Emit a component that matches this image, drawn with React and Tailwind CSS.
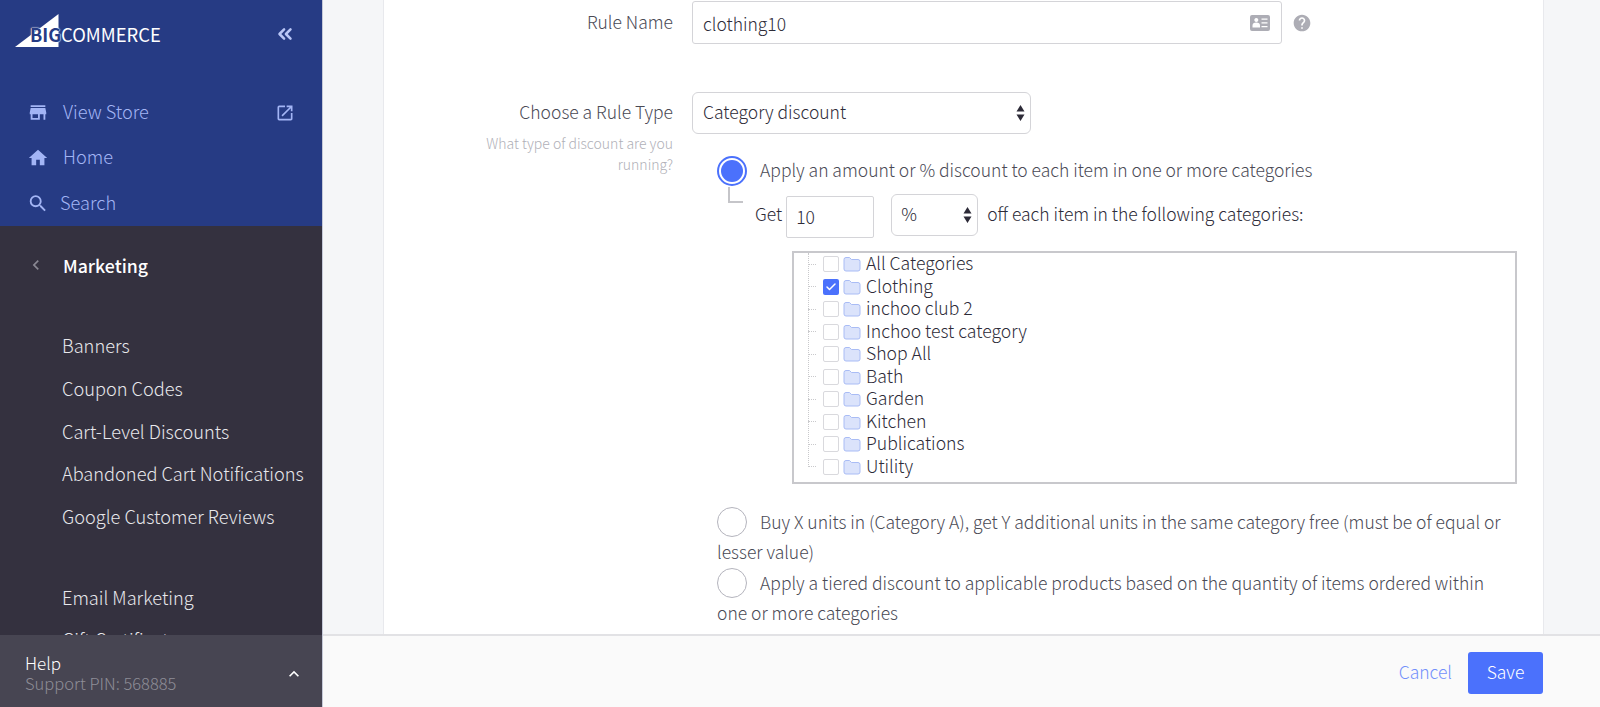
import React from "react";
import { MdStore, MdHome, MdSearch, MdOpenInNew, MdHelp, MdKeyboardArrowUp, MdKeyboardArrowLeft } from "react-icons/md";
import { ChevronsLeft, Check } from "lucide-react";

const FONT = "font-['Noto_Sans_CJK_SC','Source_Sans_Pro','Open_Sans',sans-serif]";
const cats = ["All Categories", "Clothing", "inchoo club 2", "Inchoo test category", "Shop All", "Bath", "Garden", "Kitchen", "Publications", "Utility"];

function Arrows() {
  return (
    <svg width="9" height="20" viewBox="0 0 9 20" className="shrink-0">
      <path d="M4.5 2 L8.5 8.5 H0.5 Z M0.5 11.5 H8.5 L4.5 18 Z" fill="#2d2b38" />
    </svg>
  );
}

function Folder() {
  return (
    <svg width="18" height="16" viewBox="0 0 18 16" className="block shrink-0">
      <path d="M1 3.5 a2 2 0 0 1 2-2 h3.5 l2 2 h6.5 a2 2 0 0 1 2 2 v7.5 a2 2 0 0 1-2 2 H3 a2 2 0 0 1-2-2 Z" fill="#dbe3fb" stroke="#a9bcf5" strokeWidth="1" />
    </svg>
  );
}

function Radio({ on }) {
  return on ? (
    <span className="flex h-[30px] w-[30px] shrink-0 items-center justify-center rounded-full border-2 border-[#4b71fc] bg-white">
      <span className="h-[22px] w-[22px] rounded-full bg-[#4b71fc]" />
    </span>
  ) : (
    <span className="-my-2 inline-block h-[30px] w-[30px] shrink-0 rounded-full border border-[#b4b4bd] bg-white align-[0px]" />
  );
}

function NavTop({ icon, label, gap, right, extra }) {
  return (
    <div className={`flex h-[45px] items-center pl-[27px] pr-[27px] text-[18.2px] text-[#a3b5f5] ${extra}`}>
      <span className="flex w-[22px] justify-center">{icon}</span>
      <span className={`${gap} pb-[3px]`}>{label}</span>
      {right && <span className="ml-auto">{right}</span>}
    </div>
  );
}

export default function App() {
  return (
    <div className={`${FONT} flex h-[707px] w-[1600px] overflow-hidden bg-white font-light leading-[24px] text-[#2d2b38]`}>
      <aside className="flex h-full w-[322px] shrink-0 flex-col bg-[#34313f]">
        <div className="h-[226px] shrink-0 bg-[#263b84]">
          <div className="flex h-[90px] items-start pl-[15px] pr-[26px] pt-[14px]">
            <div className="relative h-[33px] w-[146px]">
              <svg width="44" height="33" viewBox="0 0 44 33" className="absolute left-0 top-0">
                <path d="M0 33 L43.5 0 V33 Z" fill="#fff" />
              </svg>
              <span className="absolute left-[15px] top-[8px] text-[18px] leading-[24px] font-bold text-[#263b84] [text-shadow:0_0_1px_#fff,0_0_1px_#fff,0_0_2px_#fff]">BIG</span>
              <span className="absolute left-[46px] top-[8px] text-[18.4px] leading-[24px] font-normal text-white">COMMERCE</span>
            </div>
            <ChevronsLeft className="ml-auto mt-[9px] text-[#b9c6f7]" size={22} strokeWidth={2.75} />
          </div>
          <NavTop icon={<MdStore size={27} />} label="View Store" gap="ml-[14px]" right={<MdOpenInNew size={20} />} />
          <NavTop icon={<MdHome size={26} />} label="Home" gap="ml-[14px]" />
          <NavTop icon={<MdSearch size={27} />} label="Search" gap="ml-[11px]" extra="pt-[1px]" />
        </div>
        <div className="min-h-0 flex-1 overflow-hidden text-[18.2px] text-[#e8e8ec]">
          <div className="mt-[18px] flex h-[41px] items-center pl-[26px]">
            <MdKeyboardArrowLeft size={20} className="text-[#8a8893]" />
            <span className="ml-[17px] text-[17.7px] font-medium text-white">Marketing</span>
          </div>
          <div className="mt-[39px] flex flex-col pl-[62px]">
            {["Banners", "Coupon Codes", "Cart-Level Discounts", "Abandoned Cart Notifications", "Google Customer Reviews"].map((t) => (
              <div key={t} className="h-[42.75px] whitespace-nowrap leading-[43px]">{t}</div>
            ))}
          </div>
          <div className="mt-[38px] flex flex-col pl-[62px]">
            {["Email Marketing", "Gift Certificates"].map((t) => (
              <div key={t} className="h-[42px] whitespace-nowrap leading-[42px]">{t}</div>
            ))}
          </div>
        </div>
        <div className="flex h-[72px] shrink-0 items-center bg-[#474552] pl-[25px] pr-[18px]">
          <div className="pt-[3px]">
            <div className="text-[17px] leading-[21px] text-white">Help</div>
            <div className="text-[16.5px] leading-[21px] text-[#8e8d97]">Support PIN: 568885</div>
          </div>
          <MdKeyboardArrowUp size={20} className="ml-auto mt-[6px] text-white" />
        </div>
      </aside>

      <main className="flex min-w-0 flex-1 flex-col border-l border-[#c5c9d8] bg-[#f5f6f8]">
        <div className="min-h-0 flex-1 overflow-hidden">
          <div className="ml-[60px] h-full w-[1161px] border-x border-[#e8e9ed] bg-white text-[17.5px]">
            <div className="flex items-start pt-px">
              <label className="w-[289px] shrink-0 pt-[9px] text-right text-[#4a4a55]">Rule Name</label>
              <div className="ml-[19px] flex h-[43px] w-[590px] items-center rounded-[3px] border border-[#d4d4d8] pl-[10px] pr-[11px]">
                <span className="pt-[3px]">clothing10</span>
                <svg width="20" height="16" viewBox="0 0 20 16" className="ml-auto">
                  <path fillRule="evenodd" d="M2 0 H18 a2 2 0 0 1 2 2 V14 a2 2 0 0 1-2 2 H2 a2 2 0 0 1-2-2 V2 a2 2 0 0 1 2-2 Z M6.3 3 a2 2 0 1 0 .01 0 Z M2.5 12.5 h7.5 v-2 a3 2.5 0 0 0-7.5 0 Z M11.5 3.5 h6 v1.3 h-6 Z M11.5 7.3 h6 v1.3 h-6 Z M11.5 11 h6 v1.3 h-6 Z" fill="#adadb5" />
                </svg>
              </div>
              <MdHelp size={20} className="ml-[10px] mt-[12px] text-[#adadb5]" />
            </div>

            <div className="mt-[48px] flex items-start">
              <div className="w-[289px] shrink-0 text-right">
                <div className="pt-[8px] text-[#4a4a55]">Choose a Rule Type</div>
                <div className="ml-auto mt-[9px] w-[205px] text-[14px] leading-[20.5px] text-[#b0b0b8]">What type of discount are you running?</div>
              </div>
              <div className="ml-[19px] min-w-0 flex-1">
                <div className="flex h-[42px] w-[339px] items-center justify-between rounded-[6px] border border-[#d4d4d8] pl-[10px] pr-[5px]">
                  <span className="pb-[2px]">Category discount</span>
                  <Arrows />
                </div>
                <div className="relative ml-[25px] mt-[22px] flex items-center text-[#4a4a55]">
                  <Radio on />
                  <span className="ml-[13px] pb-[2px]">Apply an amount or % discount to each item in one or more categories</span>
                  <span className="absolute left-[11px] top-[31px] h-[16px] w-[15px] border-b-2 border-l-2 border-[#c5c5c9]" />
                </div>
                <div className="ml-[63px] mt-[8px] flex items-start">
                  <span className="leading-[40px]">Get</span>
                  <div className="ml-[4px] mt-[2px] flex h-[42px] w-[88px] items-center rounded-[2px] border border-[#d4d4d8] pl-[9px]">10</div>
                  <div className="ml-[17px] flex h-[42px] w-[87px] items-center justify-between rounded-[6px] border border-[#d4d4d8] pl-[9px] pr-[5px]">
                    <span className="pb-[2px]">%</span>
                    <Arrows />
                  </div>
                  <span className="ml-[9px] leading-[40px]">off each item in the following categories:</span>
                </div>
                <div className="relative ml-[100px] mt-[13px] w-[725px] border-2 border-[#c8c8cc] pb-[4px]">
                  <span className="absolute bottom-[15px] left-[14px] top-0 border-l border-dotted border-[#c9c9cc]" />
                  {cats.map((c, i) => (
                    <div key={c} className="flex h-[22.5px] items-center">
                      <span className="ml-[14px] w-[8px] border-t border-dotted border-[#c9c9cc]" />
                      <span className={`ml-[7px] flex h-[16px] w-[16px] shrink-0 items-center justify-center rounded-[2px] ${i === 1 ? "bg-[#4b71fc]" : "border border-[#d9d9dd] bg-white"}`}>
                        {i === 1 && <Check size={12} strokeWidth={3} className="text-white" />}
                      </span>
                      <span className="ml-[4px]"><Folder /></span>
                      <span className="ml-[5px] pb-[2px] text-[17.6px]">{c}</span>
                    </div>
                  ))}
                </div>
                <div className="ml-[25px] mt-[23px] w-[800px] leading-[30px] text-[#4a4a55]">
                  <div>
                    <Radio /><span className="ml-[13px]">Buy X units in (Category A), get Y additional units in the same category free (must be of equal or lesser value)</span>
                  </div>
                  <div className="mt-px">
                    <Radio /><span className="ml-[13px]">Apply a tiered discount to applicable products based on the quantity of items ordered within one or more categories</span>
                  </div>
                </div>
              </div>
            </div>
          </div>
        </div>
        <footer className="flex h-[73px] shrink-0 items-center justify-end border-t-2 border-[#e2e2e5] bg-[#fafafa] pr-[57px] pt-[2px] text-[17.5px]">
          <span className="pb-[2px] text-[#7390fb]">Cancel</span>
          <button className="ml-[16px] flex h-[42px] w-[75px] items-center justify-center rounded-[3px] bg-[#4b71fc] pb-[2px] text-white">Save</button>
        </footer>
      </main>
    </div>
  );
}
